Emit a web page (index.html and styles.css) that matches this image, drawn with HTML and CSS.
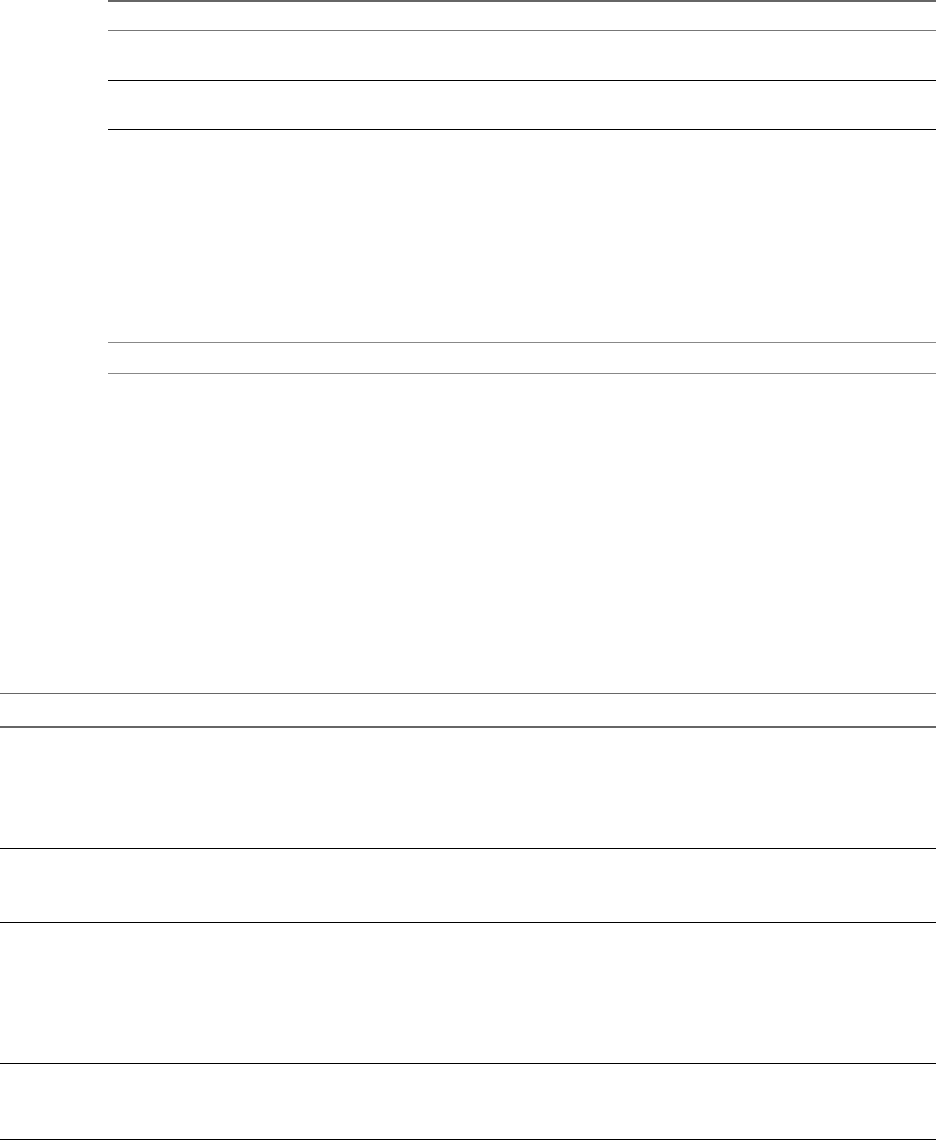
FILE: index.html
```html
<!DOCTYPE html>
<html lang="en">
<head>
  <meta charset="UTF-8" />
  <meta name="viewport" content="width=device-width, initial-scale=1.0"/>
  <title>Rows</title>
  <link rel="stylesheet" href="styles.css">
</head>
<body>
  <section class="upper">
    <div class="row row-head"></div>
    <div class="row row-b"></div>
    <div class="row row-c"></div>
    <div class="row row-d"></div>
    <div class="row row-e"></div>
  </section>

  <section class="lower">
    <div class="row row-top"></div>
    <div class="row row-1"></div>
    <div class="row row-2"></div>
    <div class="row row-3"></div>
    <div class="row row-4"></div>
  </section>
</body>
</html>
```

FILE: styles.css
```css
* {
  margin: 0;
  padding: 0;
  box-sizing: border-box;
}
body {
  font-family: 'Liberation Sans', Arial, sans-serif;
  background: #fff;
  color: #fff;
}

.upper {
  margin-left: 108px;
}
.lower {
  margin-top: 319px;
}

.row {
  border-bottom: 1px solid #000;
}

.row-head {
  height: 31px;
  border-top: 2px solid #666;
  border-bottom-color: #777;
}
.row-b { height: 50px; }
.row-c { height: 49px; }
.row-d {
  height: 213px;
  border-bottom-color: #888;
}
.row-e {
  height: 31px;
  border-bottom-color: #888;
}

.row-top {
  height: 35px;
  border-top: 1px solid #666;
  border-bottom: 2px solid #666;
}
.row-1 { height: 121px; }
.row-2 { height: 74px; }
.row-3 { height: 141px; }
.row-4 { height: 76px; }
```
